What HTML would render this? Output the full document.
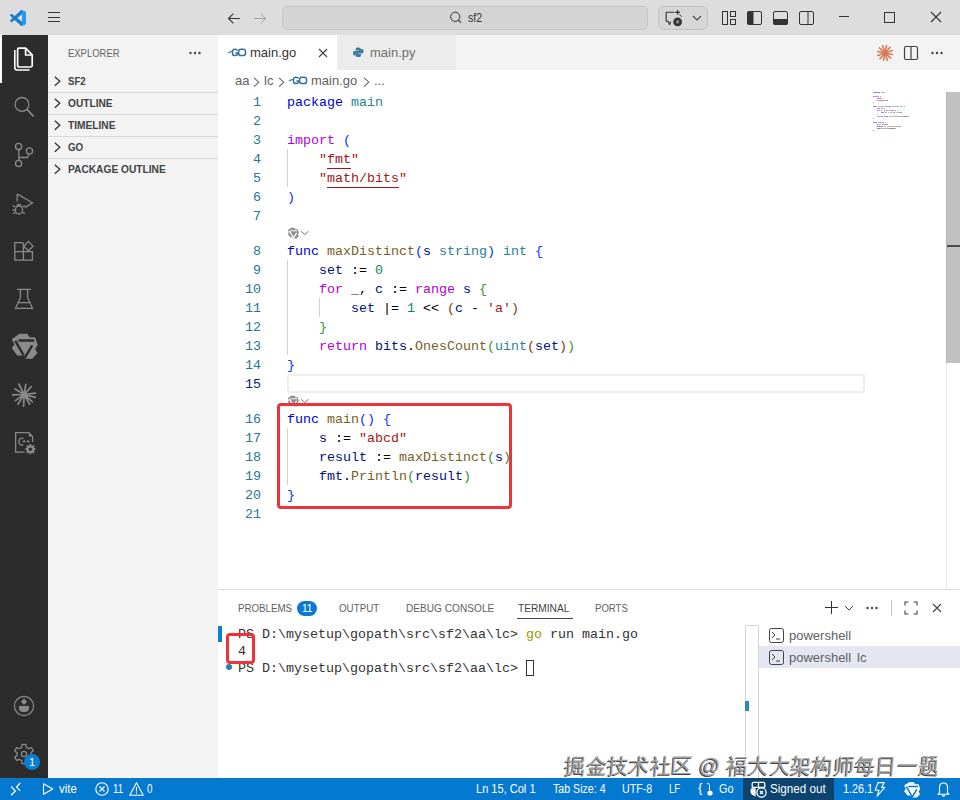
<!DOCTYPE html>
<html><head><meta charset="utf-8">
<style>
*{margin:0;padding:0;box-sizing:border-box}
html,body{width:960px;height:800px;overflow:hidden;background:#fff;font-family:"Liberation Sans",sans-serif;position:relative}
.abs{position:absolute}
.sx{transform-origin:0 50%}
#title{left:0;top:0;width:960px;height:35px;background:#dddddd}
#act{left:0;top:35px;width:48px;height:743px;background:#2c2c2c}
#side{left:48px;top:35px;width:170px;height:743px;background:#f3f3f3}
#tabs{left:218px;top:35px;width:742px;height:35px;background:#f3f3f3}
#editor{left:218px;top:70px;width:742px;height:519px;background:#fff}
#panel{left:218px;top:589px;width:742px;height:189px;background:#fff;border-top:1px solid #dcdcdc}
#status{left:0;top:778px;width:960px;height:22px;background:#0579d0;color:#fff;font-size:12px}
.mono{font-family:"Liberation Mono",monospace}
.code{position:absolute;left:0;top:1px;width:0;height:0;font-family:"Liberation Mono",monospace;font-size:13.33px;white-space:pre;line-height:19px}
.ln{position:absolute;left:218px;width:43px;text-align:right;color:#237893}
.cl{position:absolute;left:287px}
.k{color:#0000d0}.p{color:#af00db}.t{color:#267f99}.s{color:#a31515}.f{color:#795e26}.v{color:#001080}.n{color:#098658}
.b1{color:#0431fa}.b2{color:#319331}.b3{color:#7b3814}
</style></head><body>
<div id="title" class="abs">
<svg class="abs" style="left:10px;top:10px" width="16" height="16" viewBox="0 0 100 100"><path d="M96.46 10.8L75.86.87a6.23 6.23 0 0 0-7.1 1.21L29.36 38.04 12.2 25.01a4.16 4.16 0 0 0-5.32.24l-5.5 5a4.17 4.17 0 0 0 0 6.16L16.26 50 1.38 63.59a4.17 4.17 0 0 0 0 6.16l5.5 5a4.16 4.16 0 0 0 5.32.24l17.16-13.03 39.4 35.96a6.22 6.22 0 0 0 7.1 1.21l20.6-9.92a6.25 6.25 0 0 0 3.54-5.63V16.43a6.25 6.25 0 0 0-3.54-5.63zM75 72.7L45.1 50 75 27.3z" fill="#167ccc"/><path d="M75.86.87l20.6 9.93a6.25 6.25 0 0 1 3.54 5.63v67.14a6.25 6.25 0 0 1-3.54 5.63l-20.6 9.93A6.23 6.23 0 0 1 75 99.1V.9z" fill="#2a9af0"/></svg>
<svg class="abs" style="left:48px;top:12px" width="13" height="11" viewBox="0 0 13 11"><path d="M0 0.5h12M0 5.5h12M0 9.5h12" stroke="#333" stroke-width="1"/></svg>
<svg class="abs" style="left:227px;top:11px" width="14" height="14" viewBox="0 0 14 14"><path d="M13 7.5H1.5M6.4 2.6L1.5 7.5L6.4 12.4" stroke="#333" stroke-width="1.1" fill="none"/></svg>
<svg class="abs" style="left:253px;top:11px" width="14" height="14" viewBox="0 0 14 14"><path d="M1 7.5H12.5M7.6 2.6L12.5 7.5L7.6 12.4" stroke="#a0a0a0" stroke-width="1" fill="none"/></svg>
<div class="abs" style="left:282px;top:6px;width:366px;height:24px;border:1px solid #c6c6c6;border-radius:5px;background:#d4d4d4"></div>
<svg class="abs" style="left:449px;top:11px" width="14" height="14" viewBox="0 0 14 14"><circle cx="6.2" cy="5.8" r="4.6" stroke="#333" stroke-width="1" fill="none"/><path d="M9.4 9.1L11.9 11.6" stroke="#333" stroke-width="1.1"/></svg>
<div class="abs sx" style="left:468px;top:11px;font-size:12px;color:#333;transform:scaleX(0.88)">sf2</div>
<div class="abs" style="left:658px;top:6px;width:50px;height:24px;border:1px solid #c2c2c2;border-radius:6px;background:#d6d6d6"></div>
<svg class="abs" style="left:665px;top:9px" width="19" height="19" viewBox="0 0 19 19"><path d="M9.5 3.2H1.2V12.2H3L4.6 15.6L5.6 12.6" stroke="#333" stroke-width="1.15" fill="none" stroke-linejoin="round"/><path d="M12.6 1V5.8M10.2 3.4H15" stroke="#333" stroke-width="1.1"/><path d="M14.4 5.6L16.6 7.6" stroke="#333" stroke-width="1"/><circle cx="12.6" cy="12.9" r="4.4" fill="#333"/><path d="M11.2 11.5L14 14.3M14 11.5L11.2 14.3" stroke="#ccc" stroke-width="1"/></svg>
<svg class="abs" style="left:692px;top:15px" width="10" height="6" viewBox="0 0 10 6"><path d="M1 1L5 5L9 1" stroke="#444" stroke-width="1.1" fill="none"/></svg>
<svg class="abs" style="left:722px;top:11px" width="16" height="15" viewBox="0 0 16 15"><rect x="0.5" y="0.5" width="5" height="13" stroke="#333" fill="none"/><rect x="8.5" y="0.5" width="5" height="5" stroke="#333" fill="none"/><rect x="8.5" y="8.5" width="5" height="5" stroke="#333" fill="none"/></svg>
<svg class="abs" style="left:747px;top:11px" width="16" height="14" viewBox="0 0 16 14"><rect x="0.5" y="0.5" width="14" height="13" rx="1.5" stroke="#333" fill="none"/><rect x="0.5" y="0.5" width="6" height="13" fill="#333"/></svg>
<svg class="abs" style="left:773px;top:11px" width="16" height="14" viewBox="0 0 16 14"><rect x="0.5" y="0.5" width="14" height="13" rx="1.5" stroke="#333" fill="none"/><rect x="0.5" y="8" width="14" height="5.5" fill="#333"/></svg>
<svg class="abs" style="left:799px;top:11px" width="16" height="14" viewBox="0 0 16 14"><rect x="0.5" y="0.5" width="14" height="13" rx="1.5" stroke="#333" fill="none"/><path d="M9 0.5V13.5" stroke="#333"/></svg>
<svg class="abs" style="left:839px;top:16px" width="12" height="2" viewBox="0 0 12 2"><path d="M0 0.5H10" stroke="#333" stroke-width="1"/></svg>
<svg class="abs" style="left:884px;top:12px" width="11" height="11" viewBox="0 0 11 11"><rect x="0.5" y="0.5" width="10" height="10" stroke="#333" fill="none"/></svg>
<svg class="abs" style="left:930px;top:11px" width="12" height="12" viewBox="0 0 12 12"><path d="M1 1L11 11M11 1L1 11" stroke="#333" stroke-width="1.1"/></svg>
</div>
<div id="act" class="abs">
<div class="abs" style="left:0;top:0;width:2px;height:48px;background:#fff"></div>
<svg class="abs" style="left:8px;top:7px" width="32" height="32" viewBox="0 0 32 32" fill="none" stroke-linejoin="round">
<path d="M10.8 6.2H17.6L24.2 12.8V23.4Q24.2 25 22.6 25H11.4Q9.6 25 9.6 23.2V7.4Q9.6 6.2 10.8 6.2Z" stroke="#fff" stroke-width="1.7"/>
<path d="M17.6 6.5V13H24" stroke="#fff" stroke-width="1.7"/>
<path d="M6.8 8V25.5Q6.8 28 9.2 28H21.6" stroke="#fff" stroke-width="1.6"/>
</svg>
<svg class="abs" style="left:8px;top:55px" width="32" height="32" viewBox="0 0 32 32" fill="none">
<circle cx="14" cy="14.4" r="6.9" stroke="#8a8a8a" stroke-width="1.3"/>
<path d="M19 19.4L25.6 26.4" stroke="#8a8a8a" stroke-width="1.6"/>
</svg>
<svg class="abs" style="left:8px;top:103px" width="32" height="32" viewBox="0 0 32 32" fill="none" stroke="#8a8a8a" stroke-width="1.3">
<circle cx="10.6" cy="8.4" r="3.1"/><circle cx="21.5" cy="13" r="3.1"/><circle cx="10.6" cy="25.5" r="3.1"/>
<path d="M10.8 11.5V22.4M10.8 19.5H19.4L21.2 16.2"/>
</svg>
<svg class="abs" style="left:8px;top:151px" width="32" height="32" viewBox="0 0 32 32" fill="none" stroke="#8a8a8a" stroke-width="1.3">
<path d="M9.2 15.6V8.6H10.4L24.4 16.8L17 21.6"/>
<ellipse cx="11" cy="24" rx="3.6" ry="4"/><path d="M8.6 19.6Q11 17.2 13.4 19.6"/>
<path d="M4.8 19.6L7.4 21M4.6 24H7.4M5 27.8L7.6 26.4M17.2 19.6L14.6 21M17.2 27.8L14.6 26.4"/>
</svg>
<svg class="abs" style="left:8px;top:199px" width="32" height="32" viewBox="0 0 32 32" fill="none" stroke="#8a8a8a" stroke-width="1.3">
<path d="M6.8 8.6H14.4L15.4 9.6V26.2H6.8Z M6.8 17.6H24.4V26.2H15.4M15.4 17.6L24.4 17.6V26.2"/>
<path d="M20.4 7.4L25 12.2L20.4 16.8L15.8 12.2Z"/>
</svg>
<svg class="abs" style="left:8px;top:247px" width="32" height="32" viewBox="0 0 32 32" fill="none" stroke="#8a8a8a" stroke-width="1.3" stroke-linejoin="round">
<path d="M9 7.4H23M12.4 7.4V15.6L7.4 26.4H24.6L19.6 15.6V7.4M10 20.6H22"/>
</svg>
<svg class="abs" style="left:9px;top:296px" width="30" height="30" viewBox="-0.5 -0.5 18.5 18.5" ><path d="M6 1.2H10.8L12.2 3.3H15.6L17.2 8.2L15.6 10.6L17 13.2L13.8 16.6H9.8L8.4 14.6H4.6L1.2 10.2L2.8 7.6L1.2 4.6Z" fill="#8a8a8a"/><path d="M5.3 5.4H15M3.4 5.6L8.6 14.6M13.8 8.4L9.2 16" stroke="#2c2c2c" stroke-width="1.5" fill="none"/></svg>
<svg class="abs" style="left:8px;top:343px" width="32" height="32" viewBox="0 0 32 32" stroke="#8a8a8a" stroke-width="1.7" stroke-linecap="round">
<path d="M16.2 16.5L10.8 6M16.2 16.5L17.8 6.4M16.2 16.5L23.2 8.6M16.2 16.5L7 11M16.2 16.5L4.6 16.8M16.2 16.5L7.4 22.6M16.2 16.5L10 26M16.2 16.5L15.6 28.2M16.2 16.5L21.6 26.4M16.2 16.5L24.4 23.8M16.2 16.5L27.4 19.4M16.2 16.5L27.4 15.2"/>
<circle cx="16.4" cy="17" r="3" fill="#8a8a8a" stroke="none"/>
</svg>
<svg class="abs" style="left:8px;top:391px" width="32" height="32" viewBox="0 0 32 32" fill="none" stroke="#8a8a8a" stroke-width="1.3">
<path d="M16.5 26.2H7.6V6.6H20.8L24.6 10.4V16"/>
<path d="M20.8 6.6V10.4H24.6Z" fill="#8a8a8a" stroke="none"/>
<path d="M15.4 12.4Q11 11.4 11 15.6Q11 19.8 15.4 18.8"/>
<path d="M14.6 15.4H17.6M16.1 13.9V16.9M18.6 15.4H21.6M20.1 13.9V16.9" stroke-width="1"/>
<path d="M26.35 21.76 L27.90 22.13 L27.90 24.27 L26.35 24.64 L26.21 24.97 L27.04 26.33 L25.53 27.84 L24.17 27.01 L23.84 27.15 L23.47 28.70 L21.33 28.70 L20.96 27.15 L20.63 27.01 L19.27 27.84 L17.76 26.33 L18.59 24.97 L18.45 24.64 L16.90 24.27 L16.90 22.13 L18.45 21.76 L18.59 21.43 L17.76 20.07 L19.27 18.56 L20.63 19.39 L20.96 19.25 L21.33 17.70 L23.47 17.70 L23.84 19.25 L24.17 19.39 L25.53 18.56 L27.04 20.07 L26.21 21.43Z" fill="#8a8a8a" stroke="#2c2c2c" stroke-width="0.8"/>
<circle cx="22.4" cy="23.2" r="1.7" fill="#2c2c2c" stroke="none"/>
</svg>
<svg class="abs" style="left:8px;top:655px" width="32" height="32" viewBox="0 0 32 32" fill="none" stroke="#8a8a8a" stroke-width="1.2">
<circle cx="16" cy="16" r="9.6"/>
<path d="M16 8.6L19 11.8L16 15L13 11.8Z" fill="#8a8a8a" stroke="none"/>
<path d="M11 16H21V18.5Q21 22 16 22Q11 22 11 18.5Z" fill="#8a8a8a" stroke="none"/>
</svg>
<svg class="abs" style="left:8px;top:703px" width="32" height="32" viewBox="0 0 32 32" fill="none" stroke="#8a8a8a" stroke-width="1.3" stroke-linejoin="round">
<path d="M13.73 9.38 L14.07 6.39 L17.93 6.39 L18.27 9.38 L20.60 10.72 L23.36 9.53 L25.29 12.87 L22.87 14.65 L22.87 17.35 L25.29 19.13 L23.36 22.47 L20.60 21.28 L18.27 22.62 L17.93 25.61 L14.07 25.61 L13.73 22.62 L11.40 21.28 L8.64 22.47 L6.71 19.13 L9.13 17.35 L9.13 14.65 L6.71 12.87 L8.64 9.53 L11.40 10.72Z"/>
<circle cx="16" cy="16" r="2.6"/>
</svg>
<div class="abs" style="left:24px;top:719px;width:16px;height:16px;border-radius:50%;background:#0a7fd6;color:#fff;font-size:11px;text-align:center;line-height:16px">1</div>
</div>
<div id="side" class="abs">
<div class="abs sx" style="left:20px;top:12px;font-size:11px;color:#616161;transform:scaleX(0.86)">EXPLORER</div>
<svg class="abs" style="left:141px;top:16px" width="12" height="4" viewBox="0 0 12 4"><circle cx="1.5" cy="2" r="1.2" fill="#424242"/><circle cx="6" cy="2" r="1.2" fill="#424242"/><circle cx="10.5" cy="2" r="1.2" fill="#424242"/></svg>
<svg class="abs" style="left:5px;top:41px" width="8" height="11" viewBox="0 0 8 11"><path d="M1.8 0.8L6.8 5.3L1.8 9.8" stroke="#333" stroke-width="1.3" fill="none"/></svg>
<div class="abs sx" style="left:20px;top:39px;font-size:11px;font-weight:bold;color:#424242;line-height:14px;transform:scaleX(0.87)">SF2</div>
<div class="abs" style="left:0;top:57px;width:170px;height:1px;background:#d8d8d8"></div>
<svg class="abs" style="left:5px;top:63px" width="8" height="11" viewBox="0 0 8 11"><path d="M1.8 0.8L6.8 5.3L1.8 9.8" stroke="#333" stroke-width="1.3" fill="none"/></svg>
<div class="abs sx" style="left:20px;top:61px;font-size:11px;font-weight:bold;color:#424242;line-height:14px;transform:scaleX(0.925)">OUTLINE</div>
<div class="abs" style="left:0;top:79px;width:170px;height:1px;background:#d8d8d8"></div>
<svg class="abs" style="left:5px;top:85px" width="8" height="11" viewBox="0 0 8 11"><path d="M1.8 0.8L6.8 5.3L1.8 9.8" stroke="#333" stroke-width="1.3" fill="none"/></svg>
<div class="abs sx" style="left:20px;top:83px;font-size:11px;font-weight:bold;color:#424242;line-height:14px;transform:scaleX(0.925)">TIMELINE</div>
<div class="abs" style="left:0;top:101px;width:170px;height:1px;background:#d8d8d8"></div>
<svg class="abs" style="left:5px;top:107px" width="8" height="11" viewBox="0 0 8 11"><path d="M1.8 0.8L6.8 5.3L1.8 9.8" stroke="#333" stroke-width="1.3" fill="none"/></svg>
<div class="abs sx" style="left:20px;top:105px;font-size:11px;font-weight:bold;color:#424242;line-height:14px;transform:scaleX(0.89)">GO</div>
<div class="abs" style="left:0;top:123px;width:170px;height:1px;background:#d8d8d8"></div>
<svg class="abs" style="left:5px;top:129px" width="8" height="11" viewBox="0 0 8 11"><path d="M1.8 0.8L6.8 5.3L1.8 9.8" stroke="#333" stroke-width="1.3" fill="none"/></svg>
<div class="abs sx" style="left:20px;top:127px;font-size:11px;font-weight:bold;color:#424242;line-height:14px;transform:scaleX(0.926)">PACKAGE OUTLINE</div>
</div>
<div id="tabs" class="abs">
<div class="abs" style="left:0;top:0;width:119px;height:35px;background:#fff"></div>
<div class="abs" style="left:119px;top:0;width:119px;height:35px;background:#ececec"></div>
<svg class="abs" style="left:9px;top:13px" width="20" height="9" viewBox="0 0 20 9"><path d="M0.8 4.6H3.6M2.4 3.4H5" stroke="#33739d" stroke-width="0.9"/><path d="M10.6 2.6Q9.8 1.2 8.2 1.2H7.6Q5.4 1.2 5.4 4.4Q5.4 7.6 7.6 7.6H8.4Q10.6 7.6 10.8 5H8.4" stroke="#33739d" stroke-width="1.5" fill="none" stroke-linejoin="bevel"/><path d="M13.8 1.2H16.4Q18.6 1.2 18.6 4.4Q18.6 7.6 16.4 7.6H13.8Q11.6 7.6 11.6 4.4Q11.6 1.2 13.8 1.2Z" stroke="#33739d" stroke-width="1.5" fill="none"/></svg>
<div class="abs" style="left:32px;top:10px;font-size:13px;color:#333;line-height:16px">main.go</div>
<svg class="abs" style="left:100px;top:13px" width="10" height="10" viewBox="0 0 10 10"><path d="M1 1L9 9M9 1L1 9" stroke="#424242" stroke-width="1.1"/></svg>
<svg class="abs" style="left:135px;top:12px" width="10.5" height="10.5" viewBox="0 0 12 12"><path d="M5.5 0.5C3 0.5 3 1.6 3 2.6V4H6.2V4.6H1.8C0.6 4.6 0 5.6 0 7.2C0 8.8 0.6 9.6 1.8 9.6H3V8C3 7 3.6 6.2 4.8 6.2H7.8C8.6 6.2 9 5.6 9 4.8V2.6C9 1.2 7.8 0.5 5.5 0.5Z" fill="#3a7e9c"/><path d="M6.5 11.5C9 11.5 9 10.4 9 9.4V8H5.8V7.4H10.2C11.4 7.4 12 6.4 12 4.8C12 3.2 11.4 2.4 10.2 2.4H9V4C9 5 8.4 5.8 7.2 5.8H4.2C3.4 5.8 3 6.4 3 7.2V9.4C3 10.8 4.2 11.5 6.5 11.5Z" fill="#3a7e9c"/></svg>
<div class="abs" style="left:152px;top:10px;font-size:13px;color:#6f6f6f;line-height:16px">main.py</div>
</div>
<div id="editor" class="abs"></div>
<div id="panel" class="abs">
<div class="abs sx" style="left:20px;top:11px;font-size:11px;color:#616161;line-height:14px;transform:scaleX(0.885)">PROBLEMS</div>
<div class="abs" style="left:79px;top:10.5px;width:20px;height:15px;border-radius:8px;background:#0a78d4;color:#fff;font-size:11px;text-align:center;line-height:15px;letter-spacing:-0.5px">11</div>
<div class="abs sx" style="left:121px;top:11px;font-size:11px;color:#616161;line-height:14px;transform:scaleX(0.89)">OUTPUT</div>
<div class="abs sx" style="left:188px;top:11px;font-size:11px;color:#616161;line-height:14px;transform:scaleX(0.92)">DEBUG CONSOLE</div>
<div class="abs sx" style="left:300px;top:11px;font-size:11px;color:#424242;line-height:14px;transform:scaleX(0.924)">TERMINAL</div>
<div class="abs" style="left:299px;top:28px;width:56px;height:1px;background:#424242"></div>
<div class="abs sx" style="left:377px;top:11px;font-size:11px;color:#616161;line-height:14px;transform:scaleX(0.87)">PORTS</div>
<svg class="abs" style="left:607px;top:11px" width="14" height="14" viewBox="0 0 14 14"><path d="M6.5 0V13M0 6.5H13" stroke="#333" stroke-width="1"/></svg>
<svg class="abs" style="left:626px;top:15px" width="10" height="6" viewBox="0 0 10 6"><path d="M1 1L5 5L9 1" stroke="#424242" stroke-width="1" fill="none"/></svg>
<svg class="abs" style="left:648px;top:16px" width="12" height="4" viewBox="0 0 12 4"><circle cx="1.5" cy="2" r="1.2" fill="#424242"/><circle cx="6" cy="2" r="1.2" fill="#424242"/><circle cx="10.5" cy="2" r="1.2" fill="#424242"/></svg>
<div class="abs" style="left:673px;top:10px;width:1px;height:16px;background:#c8c8c8"></div>
<svg class="abs" style="left:686px;top:11px" width="14" height="14" viewBox="0 0 14 14" fill="none" stroke="#424242" stroke-width="1.1"><path d="M1 4.5V1H4.5M9.5 1H13V4.5M13 9.5V13H9.5M4.5 13H1V9.5"/></svg>
<svg class="abs" style="left:714px;top:13px" width="10" height="10" viewBox="0 0 10 10"><path d="M1 1L9 9M9 1L1 9" stroke="#424242" stroke-width="1.1"/></svg>
<div class="abs" style="left:0;top:36px;width:4px;height:16px;background:#0a7fd6"></div>
<div class="abs" style="left:8px;top:74px;width:6px;height:6px;border-radius:50%;background:#2b79b9"></div>
<div class="abs mono" style="left:20px;top:36px;font-size:13.33px;line-height:17px;white-space:pre;color:#333">PS D:\mysetup\gopath\src\sf2\aa\lc&gt; <span style="color:#949800">go</span> run main.go
4
PS D:\mysetup\gopath\src\sf2\aa\lc&gt; </div>
<div class="abs" style="left:308px;top:70px;width:8px;height:16px;border:1px solid #333"></div>
<div class="abs" style="left:527px;top:35px;width:14px;height:155px;border-left:1px solid #d4d4d4;border-right:1px solid #d4d4d4;border-top:1px solid #d4d4d4"></div>
<div class="abs" style="left:527px;top:111px;width:4px;height:10px;background:#2b87c8"></div>
<div class="abs" style="left:541px;top:56px;width:201px;height:22px;background:#e4e6f1"></div>
<svg class="abs" style="left:551px;top:38px" width="15" height="15" viewBox="0 0 15 15" fill="none" stroke="#424242" stroke-width="1"><rect x="0.5" y="0.5" width="14" height="14" rx="2"/><path d="M3 4L6 7L3 10M7 11H11"/></svg>
<div class="abs" style="left:571px;top:38px;font-size:13px;color:#616161;line-height:16px">powershell</div>
<svg class="abs" style="left:551px;top:60px" width="15" height="15" viewBox="0 0 15 15" fill="none" stroke="#424242" stroke-width="1"><rect x="0.5" y="0.5" width="14" height="14" rx="2"/><path d="M3 4L6 7L3 10M7 11H11"/></svg>
<div class="abs" style="left:571px;top:60px;font-size:13px;color:#616161;line-height:16px">powershell</div>
<div class="abs" style="left:639px;top:60px;font-size:13px;color:#616161;line-height:16px">lc</div>
<div class="abs" style="left:8px;top:43px;width:29px;height:31px;border:3.5px solid #ee3338;border-radius:4px"></div>
</div>
<div id="status" class="abs">
<svg class="abs" style="left:0;top:0" width="24" height="22" viewBox="0 0 24 22" fill="none" stroke="#fff" stroke-width="1.3"><path d="M11.1 8.5L15.3 12.9L11.1 17.3M20.2 4.9L16.6 9.1L20.2 12.9"/></svg>
<svg class="abs" style="left:42px;top:5px" width="12" height="12" viewBox="0 0 12 12" fill="none" stroke="#fff" stroke-width="1.1"><path d="M1.5 0.8V11.2L10.8 6Z" stroke-linejoin="round"/></svg>
<div class="abs sx" style="left:59px;top:3px;line-height:16px;transform:scaleX(0.95)">vite</div>
<svg class="abs" style="left:95px;top:4px" width="14" height="14" viewBox="0 0 14 14" fill="none" stroke="#fff" stroke-width="1.1"><circle cx="7" cy="7" r="6.2"/><path d="M4.5 4.5L9.5 9.5M9.5 4.5L4.5 9.5"/></svg>
<div class="abs sx" style="left:113px;top:3px;line-height:16px;transform:scaleX(0.8)">11</div>
<svg class="abs" style="left:129px;top:4px" width="15" height="14" viewBox="0 0 15 14" fill="none" stroke="#fff" stroke-width="1.1"><path d="M7.5 0.8L14.2 13.2H0.8Z" stroke-linejoin="round"/><path d="M7.5 5V9.5M7.5 10.6V12"/></svg>
<div class="abs sx" style="left:147px;top:3px;line-height:16px;transform:scaleX(0.82)">0</div>
<div class="abs sx" style="left:476px;top:3px;line-height:16px;transform:scaleX(0.92)">Ln 15, Col 1</div>
<div class="abs sx" style="left:553px;top:3px;line-height:16px;transform:scaleX(0.885)">Tab Size: 4</div>
<div class="abs sx" style="left:622px;top:3px;line-height:16px;transform:scaleX(0.89)">UTF-8</div>
<div class="abs sx" style="left:669px;top:3px;line-height:16px;transform:scaleX(0.8)">LF</div>
<div class="abs" style="left:698px;top:2px;line-height:16px;font-size:13px">{</div>
<svg class="abs" style="left:706px;top:4px" width="8" height="15" viewBox="0 0 8 15"><path d="M1 1Q3.5 1 3.5 3.5V8" stroke="#fff" stroke-width="1" fill="none"/><circle cx="4" cy="11" r="2.6" fill="#fff"/></svg>
<div class="abs sx" style="left:719px;top:3px;line-height:16px;transform:scaleX(0.9)">Go</div>
<div class="abs" style="left:743px;top:0;width:91px;height:22px;background:#0c436f"></div>
<svg class="abs" style="left:750px;top:3px" width="17" height="17" viewBox="0 0 17 17"><path d="M2.2 6.5V2.8Q2.2 1.3 3.7 1.3H13.3Q14.8 1.3 14.8 2.8V6.3M2.2 6.3H14.8M8.5 1.3V6.3" stroke="#fff" stroke-width="1.3" fill="none"/><path d="M1 7.5Q0.3 9.5 0.6 11.5Q1.2 13.6 3.6 14.6L5.6 15.4V7.2H2Z" fill="#fff"/><circle cx="11.5" cy="11.5" r="4.6" fill="#0c436f" stroke="#fff" stroke-width="1.3"/><path d="M10 10L13 13M13 10L10 13" stroke="#fff" stroke-width="1.3"/></svg>
<div class="abs sx" style="left:770px;top:3px;line-height:16px;transform:scaleX(0.97)">Signed out</div>
<div class="abs sx" style="left:843px;top:3px;line-height:16px;transform:scaleX(0.9)">1.26.1</div>
<svg class="abs" style="left:874px;top:4px" width="12" height="15" viewBox="0 0 12 15" fill="none" stroke="#fff" stroke-width="1.1" stroke-linejoin="round"><path d="M4 0.6H10.2L7.6 5.4H10.8L3.2 14.2L5 8.2H1.2Z"/></svg>
<svg class="abs" style="left:903px;top:3px" width="18" height="18" viewBox="0 0 18 18"><path d="M6 1.2H10.8L12.2 3.3H15.6L17.2 8.2L15.6 10.6L17 13.2L13.8 16.6H9.8L8.4 14.6H4.6L1.2 10.2L2.8 7.6L1.2 4.6Z" fill="#fff"/><path d="M5.3 5.4H15M3.4 5.6L8.6 14.6M13.8 8.4L9.2 16" stroke="#0579d0" stroke-width="1.5" fill="none"/></svg>
<svg class="abs" style="left:937px;top:3px" width="13" height="16" viewBox="0 0 13 16" fill="none" stroke="#fff" stroke-width="1.1"><path d="M2.5 12V6.5Q2.5 2 6.5 2Q10.5 2 10.5 6.5V12L12 13.2H1L2.5 12Z" stroke-linejoin="round"/><path d="M5 14.5Q6.5 15.8 8 14.5"/></svg>
</div>
<div class="abs" style="left:564px;top:752px;font-size:21px;line-height:28px;font-weight:500;color:#a0a0a0;white-space:pre;letter-spacing:0.3px;transform:skewX(-4deg);transform-origin:0 100%;text-shadow:-1px 1px 0 #444,1px -1px 0 #fff">掘金技术社区 @ 福大大架构师每日一题</div>

<div class="abs" style="left:218px;top:70px;width:742px;height:22px">
<div class="abs" style="left:17px;top:3px;font-size:13px;color:#616161;line-height:16px">aa</div>
<svg class="abs" style="left:35px;top:6.5px" width="8" height="11" viewBox="0 0 8 11"><path d="M1 0.8L5.8 5.2L1 9.6" stroke="#616161" stroke-width="1.05" fill="none"/></svg>
<div class="abs" style="left:46px;top:3px;font-size:13px;color:#616161;line-height:16px">lc</div>
<svg class="abs" style="left:60px;top:6.5px" width="8" height="11" viewBox="0 0 8 11"><path d="M1 0.8L5.8 5.2L1 9.6" stroke="#616161" stroke-width="1.05" fill="none"/></svg>
<svg class="abs" style="left:70px;top:6px" width="20" height="9" viewBox="0 0 20 9"><path d="M0.8 4.6H3.6M2.4 3.4H5" stroke="#33739d" stroke-width="0.9"/><path d="M10.6 2.6Q9.8 1.2 8.2 1.2H7.6Q5.4 1.2 5.4 4.4Q5.4 7.6 7.6 7.6H8.4Q10.6 7.6 10.8 5H8.4" stroke="#33739d" stroke-width="1.5" fill="none" stroke-linejoin="bevel"/><path d="M13.8 1.2H16.4Q18.6 1.2 18.6 4.4Q18.6 7.6 16.4 7.6H13.8Q11.6 7.6 11.6 4.4Q11.6 1.2 13.8 1.2Z" stroke="#33739d" stroke-width="1.5" fill="none"/></svg>
<div class="abs" style="left:93px;top:3px;font-size:13px;color:#616161;line-height:16px">main.go</div>
<svg class="abs" style="left:145px;top:6.5px" width="8" height="11" viewBox="0 0 8 11"><path d="M1 0.8L5.8 5.2L1 9.6" stroke="#616161" stroke-width="1.05" fill="none"/></svg>
<div class="abs" style="left:156px;top:3px;font-size:13px;color:#616161;line-height:16px">...</div>
</div>
<div class="code">
<div class="ln" style="top:92px">1</div><div class="cl" style="top:92px"><span class="k">package</span> <span class="t">main</span></div>
<div class="ln" style="top:111px">2</div>
<div class="ln" style="top:130px">3</div><div class="cl" style="top:130px"><span class="p">import</span> <span class="b1">(</span></div>
<div class="ln" style="top:149px">4</div><div class="cl" style="top:149px">    <span class="s">"fmt"</span></div>
<div class="ln" style="top:168px">5</div><div class="cl" style="top:168px">    <span class="s">"math/bits"</span></div>
<div class="ln" style="top:187px">6</div><div class="cl" style="top:187px"><span class="b1">)</span></div>
<div class="ln" style="top:206px">7</div>
<div class="ln" style="top:241px">8</div><div class="cl" style="top:241px"><span class="k">func</span> <span class="f">maxDistinct</span><span class="b1">(</span><span class="v">s</span> <span class="t">string</span><span class="b1">)</span> <span class="t">int</span> <span class="b1">{</span></div>
<div class="ln" style="top:260px">9</div><div class="cl" style="top:260px">    <span class="v">set</span> := <span class="n">0</span></div>
<div class="ln" style="top:279px">10</div><div class="cl" style="top:279px">    <span class="p">for</span> <span class="v">_</span>, <span class="v">c</span> := <span class="p">range</span> <span class="v">s</span> <span class="b2">{</span></div>
<div class="ln" style="top:298px">11</div><div class="cl" style="top:298px">        <span class="v">set</span> |= <span class="n">1</span> &lt;&lt; <span class="b3">(</span><span class="v">c</span> - <span class="s">'a'</span><span class="b3">)</span></div>
<div class="ln" style="top:317px">12</div><div class="cl" style="top:317px">    <span class="b2">}</span></div>
<div class="ln" style="top:336px">13</div><div class="cl" style="top:336px">    <span class="p">return</span> <span class="v">bits</span>.<span class="f">OnesCount</span><span class="b2">(</span><span class="t">uint</span><span class="b3">(</span><span class="v">set</span><span class="b3">)</span><span class="b2">)</span></div>
<div class="ln" style="top:355px">14</div><div class="cl" style="top:355px"><span class="b1">}</span></div>
<div class="ln" style="top:374px;color:#0b216f">15</div>
<div class="ln" style="top:409px">16</div><div class="cl" style="top:409px"><span class="k">func</span> <span class="f">main</span><span class="b1">()</span> <span class="b1">{</span></div>
<div class="ln" style="top:428px">17</div><div class="cl" style="top:428px">    <span class="v">s</span> := <span class="s">"abcd"</span></div>
<div class="ln" style="top:447px">18</div><div class="cl" style="top:447px">    <span class="v">result</span> := <span class="f">maxDistinct</span><span class="b2">(</span><span class="v">s</span><span class="b2">)</span></div>
<div class="ln" style="top:466px">19</div><div class="cl" style="top:466px">    <span class="v">fmt</span>.<span class="f">Println</span><span class="b2">(</span><span class="v">result</span><span class="b2">)</span></div>
<div class="ln" style="top:485px">20</div><div class="cl" style="top:485px"><span class="b1">}</span></div>
<div class="ln" style="top:504px">21</div>
</div>

<svg class="abs" style="left:877px;top:45px" width="16" height="16" viewBox="0 0 16 16" stroke="#d97757" stroke-width="1.6" stroke-linecap="round"><line x1="8" y1="8" x2="15.45" y2="9.51"/><line x1="8" y1="8" x2="13.70" y2="13.03"/><line x1="8" y1="8" x2="10.42" y2="15.21"/><line x1="8" y1="8" x2="6.49" y2="15.45"/><line x1="8" y1="8" x2="2.97" y2="13.70"/><line x1="8" y1="8" x2="0.79" y2="10.42"/><line x1="8" y1="8" x2="0.55" y2="6.49"/><line x1="8" y1="8" x2="2.30" y2="2.97"/><line x1="8" y1="8" x2="5.58" y2="0.79"/><line x1="8" y1="8" x2="9.51" y2="0.55"/><line x1="8" y1="8" x2="13.03" y2="2.30"/><line x1="8" y1="8" x2="15.21" y2="5.58"/><circle cx="8" cy="8" r="2.5" fill="#d97757" stroke="none"/></svg>
<svg class="abs" style="left:903px;top:45px" width="16" height="16" viewBox="0 0 16 16" fill="none" stroke="#424242" stroke-width="1.2"><rect x="1.5" y="1.5" width="13" height="13" rx="1.5"/><path d="M8 1.5V14.5"/></svg>
<svg class="abs" style="left:931px;top:51px" width="12" height="4" viewBox="0 0 12 4"><circle cx="1.5" cy="2" r="1.2" fill="#424242"/><circle cx="6" cy="2" r="1.2" fill="#424242"/><circle cx="10.5" cy="2" r="1.2" fill="#424242"/></svg>
<div class="abs" style="left:287px;top:374px;width:578px;height:19px;border:2px solid #eeeeee;border-radius:2px"></div>
<div class="abs" style="left:287px;top:149px;width:1px;height:38px;background:#d3d3d3"></div>
<div class="abs" style="left:287px;top:260px;width:1px;height:95px;background:#d3d3d3"></div>
<div class="abs" style="left:319px;top:298px;width:1px;height:19px;background:#d3d3d3"></div>
<div class="abs" style="left:287px;top:428px;width:1px;height:57px;background:#d3d3d3"></div>
<div class="abs" style="left:327px;top:168px;width:24px;height:1px;background:#a31515"></div>
<div class="abs" style="left:327px;top:187px;width:72px;height:1px;background:#a31515"></div>
<svg class="abs" style="left:286.5px;top:226.5px" width="12.5" height="12.5" viewBox="0 0 18 18"><path d="M6 1.2H10.8L12.2 3.3H15.6L17.2 8.2L15.6 10.6L17 13.2L13.8 16.6H9.8L8.4 14.6H4.6L1.2 10.2L2.8 7.6L1.2 4.6Z" fill="#8f8f8f"/><path d="M5.3 5.4H15M3.4 5.6L8.6 14.6M13.8 8.4L9.2 16" stroke="#fff" stroke-width="1.7" fill="none"/></svg><svg class="abs" style="left:300px;top:230px" width="10" height="6" viewBox="0 0 10 6"><path d="M1 1.2L4.8 4.6L8.6 1.2" stroke="#777" stroke-width="1" fill="none"/></svg>
<svg class="abs" style="left:286.5px;top:394.5px" width="12.5" height="12.5" viewBox="0 0 18 18"><path d="M6 1.2H10.8L12.2 3.3H15.6L17.2 8.2L15.6 10.6L17 13.2L13.8 16.6H9.8L8.4 14.6H4.6L1.2 10.2L2.8 7.6L1.2 4.6Z" fill="#8f8f8f"/><path d="M5.3 5.4H15M3.4 5.6L8.6 14.6M13.8 8.4L9.2 16" stroke="#fff" stroke-width="1.7" fill="none"/></svg><svg class="abs" style="left:300px;top:398px" width="10" height="6" viewBox="0 0 10 6"><path d="M1 1.2L4.8 4.6L8.6 1.2" stroke="#777" stroke-width="1" fill="none"/></svg>
<div class="abs" style="left:946px;top:92px;width:14px;height:271px;background:#c1c1c1"></div>
<div class="abs" style="left:946px;top:92px;width:1px;height:271px;background:#b4b4b4"></div>
<div class="abs" style="left:947px;top:245px;width:13px;height:2px;background:#4b4b4b"></div>
<div class="abs" style="left:946px;top:363px;width:1px;height:226px;background:#e8e8e8"></div>
<svg class="abs" style="left:873px;top:92px" width="60" height="44" viewBox="0 0 60 44" opacity="0.45"><rect x="0" y="0" width="7" height="1" fill="#0000ff"/><rect x="8" y="0" width="4" height="1" fill="#267f99"/><rect x="0" y="4" width="6" height="1" fill="#af00db"/><rect x="7" y="4" width="1" height="1" fill="#0431fa"/><rect x="4" y="6" width="5" height="1" fill="#a31515"/><rect x="4" y="8" width="11" height="1" fill="#a31515"/><rect x="0" y="10" width="1" height="1" fill="#0431fa"/><rect x="0" y="14" width="4" height="1" fill="#0000ff"/><rect x="5" y="14" width="11" height="1" fill="#795e26"/><rect x="16" y="14" width="1" height="1" fill="#0431fa"/><rect x="17" y="14" width="1" height="1" fill="#001080"/><rect x="19" y="14" width="6" height="1" fill="#267f99"/><rect x="25" y="14" width="1" height="1" fill="#0431fa"/><rect x="27" y="14" width="3" height="1" fill="#267f99"/><rect x="31" y="14" width="1" height="1" fill="#0431fa"/><rect x="4" y="16" width="3" height="1" fill="#001080"/><rect x="8" y="16" width="2" height="1" fill="#555"/><rect x="11" y="16" width="1" height="1" fill="#098658"/><rect x="4" y="18" width="3" height="1" fill="#af00db"/><rect x="8" y="18" width="1" height="1" fill="#001080"/><rect x="11" y="18" width="1" height="1" fill="#001080"/><rect x="13" y="18" width="2" height="1" fill="#555"/><rect x="16" y="18" width="5" height="1" fill="#af00db"/><rect x="22" y="18" width="1" height="1" fill="#001080"/><rect x="24" y="18" width="1" height="1" fill="#319331"/><rect x="8" y="20" width="3" height="1" fill="#001080"/><rect x="12" y="20" width="2" height="1" fill="#555"/><rect x="15" y="20" width="1" height="1" fill="#098658"/><rect x="17" y="20" width="2" height="1" fill="#555"/><rect x="20" y="20" width="1" height="1" fill="#7b3814"/><rect x="21" y="20" width="1" height="1" fill="#001080"/><rect x="23" y="20" width="1" height="1" fill="#555"/><rect x="25" y="20" width="3" height="1" fill="#a31515"/><rect x="28" y="20" width="1" height="1" fill="#7b3814"/><rect x="4" y="22" width="1" height="1" fill="#319331"/><rect x="4" y="24" width="6" height="1" fill="#af00db"/><rect x="11" y="24" width="4" height="1" fill="#001080"/><rect x="16" y="24" width="9" height="1" fill="#795e26"/><rect x="25" y="24" width="1" height="1" fill="#319331"/><rect x="26" y="24" width="4" height="1" fill="#267f99"/><rect x="30" y="24" width="1" height="1" fill="#7b3814"/><rect x="31" y="24" width="3" height="1" fill="#001080"/><rect x="34" y="24" width="2" height="1" fill="#7b3814"/><rect x="0" y="26" width="1" height="1" fill="#0431fa"/><rect x="0" y="30" width="4" height="1" fill="#0000ff"/><rect x="5" y="30" width="4" height="1" fill="#795e26"/><rect x="9" y="30" width="2" height="1" fill="#0431fa"/><rect x="12" y="30" width="1" height="1" fill="#0431fa"/><rect x="4" y="32" width="1" height="1" fill="#001080"/><rect x="6" y="32" width="2" height="1" fill="#555"/><rect x="9" y="32" width="6" height="1" fill="#a31515"/><rect x="4" y="34" width="6" height="1" fill="#001080"/><rect x="11" y="34" width="2" height="1" fill="#555"/><rect x="14" y="34" width="11" height="1" fill="#795e26"/><rect x="25" y="34" width="1" height="1" fill="#319331"/><rect x="26" y="34" width="1" height="1" fill="#001080"/><rect x="27" y="34" width="1" height="1" fill="#319331"/><rect x="4" y="36" width="3" height="1" fill="#001080"/><rect x="7" y="36" width="1" height="1" fill="#555"/><rect x="8" y="36" width="7" height="1" fill="#795e26"/><rect x="15" y="36" width="1" height="1" fill="#319331"/><rect x="16" y="36" width="6" height="1" fill="#001080"/><rect x="22" y="36" width="1" height="1" fill="#319331"/><rect x="0" y="38" width="1" height="1" fill="#0431fa"/></svg>
<div class="abs" style="left:277px;top:403px;width:235px;height:106px;border:3.5px solid #ee3338;border-radius:4px"></div>
</body></html>
